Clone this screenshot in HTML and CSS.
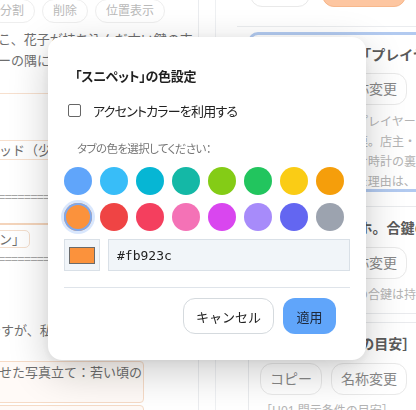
FILE: index.html
```html
<!DOCTYPE html>
<html lang="ja">
<head>
  <meta charset="UTF-8" />
  <meta name="viewport" content="width=device-width, initial-scale=1.0"/>
  <title>スニペットの色設定</title>
  <link rel="stylesheet" href="styles.css">
</head>
<body>
  <div class="page">
    <section class="editor">
      <div class="toolbar">
        <span class="pill">分割</span>
        <span class="pill">削除</span>
        <span class="pill">位置表示</span>
      </div>
      <div class="doc">
        <p class="ln">こ、花子が持ち込んだ古い鍵の束</p>
        <p class="ln">ーの隅に置かれたままだった。</p>
        <div class="rule"></div>
        <p class="ln mark">ッド（少し埃をかぶった）</p>
        <p class="ln sep">==========================</p>
        <div class="rule thick"></div>
        <p class="ln tag-line"><span class="tag">ン」</span></p>
        <p class="ln sep second">==========================</p>
        <p class="ln low"><span class="link">で</span>すが、私はその鍵を</p>
        <p class="ln box">せた写真立て：若い頃の</p>
        <p class="ln box next"></p>
      </div>
    </section>

    <div class="splitter"></div>

    <aside class="panel">
      <div class="panel-bar">
        <span class="bar-btn ghost"></span>
        <span class="bar-btn accent"></span>
      </div>

      <div class="cards">
        <div class="card selected">
          <div class="card-title">［S03 老舗喫茶「プレイヤー専用」の席］</div>
          <div class="card-actions">
            <span class="act">コピー</span><span class="act">名称変更</span><span class="act">削除</span>
          </div>
          <p class="card-desc">奥の席は常連の「プレイヤー専用」</p>
          <p class="card-desc">カウンター席の常連。店主・マスター</p>
          <p class="card-desc">合鍵はいつも壁掛け時計の裏にある</p>
          <p class="card-desc">いつもそこに置いた理由は、落とさない</p>
        </div>

        <div class="card">
          <div class="card-title">［K05 店主スマホ。合鍵の所在］</div>
          <div class="card-actions">
            <span class="act">コピー</span><span class="act">名称変更</span><span class="act">削除</span>
          </div>
          <p class="card-desc">店主いわく、普段の合鍵は持ち歩かない</p>
        </div>

        <div class="card">
          <div class="card-title">［H01 開示条件の目安］</div>
          <div class="card-actions">
            <span class="act">コピー</span><span class="act">名称変更</span><span class="act">削除</span>
          </div>
          <p class="card-desc">［H01 開示条件の目安］</p>
        </div>
      </div>
    </aside>
  </div>

  <div class="overlay">
    <div class="dialog">
      <h2 class="dialog-title">「スニペット」の色設定</h2>

      <label class="check-row">
        <input type="checkbox" class="check">
        <span>アクセントカラーを利用する</span>
      </label>

      <p class="hint">タブの色を選択してください：</p>

      <div class="swatches">
        <span class="swatch" style="background:#60a5fa"></span>
        <span class="swatch" style="background:#38bdf8"></span>
        <span class="swatch" style="background:#06b6d4"></span>
        <span class="swatch" style="background:#14b8a6"></span>
        <span class="swatch" style="background:#84cc16"></span>
        <span class="swatch" style="background:#22c55e"></span>
        <span class="swatch" style="background:#facc15"></span>
        <span class="swatch" style="background:#f59e0b"></span>
        <span class="swatch active" style="background:#fb923c"></span>
        <span class="swatch" style="background:#ef4444"></span>
        <span class="swatch" style="background:#f43f5e"></span>
        <span class="swatch" style="background:#f472b6"></span>
        <span class="swatch" style="background:#d946ef"></span>
        <span class="swatch" style="background:#a78bfa"></span>
        <span class="swatch" style="background:#6366f1"></span>
        <span class="swatch" style="background:#9ca3af"></span>
      </div>

      <div class="custom-row">
        <span class="picker"><span class="picker-fill" style="background:#fb923c"></span></span>
        <input type="text" class="hex" value="#fb923c">
      </div>

      <div class="dialog-actions">
        <button class="btn cancel">キャンセル</button>
        <button class="btn apply">適用</button>
      </div>
    </div>
  </div>
</body>
</html>
```

FILE: styles.css
```css
body {
  margin: 0;
  padding: 0;
  background: #ffffff;
  font-family: "Noto Sans", "Noto Sans CJK JP", sans-serif;
  color: #333;
  overflow: hidden;
  height: 410px;
}

p {
  margin: 0;
}

.page {
  display: flex;
  width: 460px;
  height: 410px;
}

/* 左側のエディタ */
.editor {
  width: 198px;
  flex-shrink: 0;
  border-right: 1px solid #e8eaed;
  overflow: hidden;
}

.toolbar {
  display: flex;
  gap: 7px;
  margin-left: -11px;
  margin-top: -1px;
}

.pill {
  height: 22px;
  line-height: 22px;
  padding: 0 10px;
  border: 1px solid #ececec;
  border-radius: 999px;
  font-size: 12px;
  color: #b0b0b0;
  white-space: nowrap;
}

.doc {
  margin-top: 6px;
  margin-left: -2px;
}

.ln {
  font-size: 13px;
  line-height: 21px;
  color: #5a5a5a;
  white-space: nowrap;
}

.rule {
  margin-top: 22px;
  height: 1px;
  background: #f6dcc8;
}

.rule.thick {
  margin-top: 15px;
  height: 2px;
  background: #f3cfb2;
}

.ln.mark {
  margin-top: 46px;
  margin-left: -6px;
  padding-left: 6px;
  line-height: 18px;
  border: 1px solid #f6dcc8;
  border-radius: 3px;
}

.ln.sep {
  margin-top: 27px;
  color: #9a9a9a;
  letter-spacing: -1px;
}

.ln.sep.second {
  margin-top: 0;
  line-height: 18px;
}

.ln.tag-line {
  margin-top: 4px;
}

.tag {
  display: inline-block;
  line-height: 16px;
  padding: 0 4px 0 8px;
  margin-left: -8px;
  border: 1px solid #f3dac6;
  border-radius: 5px;
}

.ln.low {
  margin-top: 52px;
  margin-left: -10px;
}

.link {
  color: #6e9ad6;
}

.ln.box {
  margin-top: 20px;
  margin-left: -4px;
  padding-left: 4px;
  width: 144px;
  height: 40px;
  border: 1px solid #f5d6bf;
  border-radius: 4px;
  background: #fffaf6;
}

.ln.box.next {
  margin-top: 2px;
}

.splitter {
  width: 16px;
  flex-shrink: 0;
  border-right: 1px solid #eceef1;
}

/* 右側のスニペット一覧 */
.panel {
  flex: 1;
  padding-left: 21px;
}

.panel-bar {
  display: flex;
  gap: 12px;
  margin-top: -25px;
  padding-left: 13px;
  padding-bottom: 19px;
  border-bottom: 1px solid #e8eaed;
}

.bar-btn {
  height: 30px;
  border-radius: 12px;
  border: 1px solid #e6e6e6;
}

.bar-btn.ghost {
  width: 58px;
}

.bar-btn.accent {
  width: 82px;
  background: #fdbf95;
  border-color: #f6ad7b;
}

.cards {
  margin-top: 5px;
  padding-left: 11px;
}

.card {
  width: 200px;
  border: 1px solid #e6e8eb;
  border-radius: 10px;
  padding: 10px 11px 8px;
  margin-top: 8px;
  overflow: hidden;
}

.card.selected {
  margin-top: 0;
  height: 160px;
  box-sizing: border-box;
  border: 3px solid #a8c3ee;
  padding: 9px 9px 0;
}

.card.selected + .card {
  margin-top: 14px;
}

.card-title {
  font-size: 14px;
  line-height: 22px;
  font-weight: bold;
  color: #444;
  white-space: nowrap;
}

.card-actions {
  display: flex;
  gap: 9px;
  margin-top: 8px;
}

.card.selected .card-actions {
  margin-top: 7px;
}

.act {
  height: 30px;
  line-height: 30px;
  padding: 0 9px;
  border: 1px solid #e6e6e6;
  border-radius: 12px;
  font-size: 14px;
  color: #777;
  white-space: nowrap;
}

.card-desc {
  font-size: 12px;
  line-height: 20px;
  color: #a9a9a9;
  white-space: nowrap;
}

.card-actions + .card-desc {
  margin-top: 6px;
}

.card.selected .card-actions + .card-desc {
  margin-top: 7px;
}

/* モーダル */
.overlay {
  position: fixed;
  top: 0;
  left: 0;
  right: 0;
  bottom: 0;
  background: rgba(255, 255, 255, 0.12);
  backdrop-filter: blur(0.5px);
}

.dialog {
  position: absolute;
  left: 48px;
  top: 37px;
  width: 318px;
  box-sizing: border-box;
  padding: 28px 16px 26px;
  background: #ffffff;
  border-radius: 14px;
  box-shadow: 0 12px 40px rgba(0, 0, 0, 0.2), 0 2px 8px rgba(0, 0, 0, 0.06);
  font-family: "Noto Sans CJK JP", "Noto Sans", sans-serif;
  font-feature-settings: "palt";
}

.dialog-title {
  margin: 0;
  padding-left: 11px;
  font-size: 13px;
  line-height: 22px;
  font-weight: bold;
  color: #1f1f1f;
  letter-spacing: -0.3px;
}

.check-row {
  display: flex;
  align-items: center;
  height: 20px;
  margin-top: 13px;
  font-size: 13px;
  letter-spacing: -0.8px;
  color: #222;
}

.check {
  appearance: none;
  -webkit-appearance: none;
  width: 13px;
  height: 13px;
  margin: 0 12px 0 4px;
  border: 1px solid #666;
  border-radius: 2px;
  background: #fff;
}

.hint {
  margin-top: 19px;
  padding-left: 13px;
  font-size: 11.5px;
  line-height: 18px;
  letter-spacing: -0.6px;
  color: #777;
}

.swatches {
  display: grid;
  grid-template-columns: repeat(8, 28px);
  gap: 8px;
  margin-top: 10px;
}

.swatch {
  width: 28px;
  height: 28px;
  border-radius: 50%;
}

.swatch.active {
  box-shadow: inset 0 0 0 2px #7ea8ec, 0 0 0 3px rgba(147, 187, 250, 0.35);
}

.custom-row {
  display: flex;
  gap: 8px;
  margin-top: 8px;
}

.picker {
  width: 36px;
  height: 32px;
  box-sizing: border-box;
  display: flex;
  align-items: center;
  justify-content: center;
  background: #f1f5f9;
  border: 1px solid #d9e0e7;
}

.picker-fill {
  width: 26px;
  height: 17px;
  box-sizing: border-box;
  border: 1px solid #6b6b6b;
}

.hex {
  flex: 1;
  height: 32px;
  box-sizing: border-box;
  padding: 0 8px;
  background: #f1f5f9;
  border: 1px solid #d9e0e7;
  font-family: "DejaVu Sans Mono", monospace;
  font-size: 13px;
  color: #222;
  outline: none;
}

.dialog-actions {
  display: flex;
  justify-content: flex-end;
  gap: 9px;
  margin-top: 16px;
  padding-top: 10px;
  padding-right: 14px;
  border-top: 1px solid #dfe4ea;
}

.btn {
  height: 36px;
  border-radius: 12px;
  font-family: "Noto Sans CJK JP", sans-serif;
  font-size: 13px;
  color: #222;
  cursor: pointer;
}

.btn.cancel {
  width: 91px;
  background: #fff;
  border: 1px solid #d5dade;
}

.btn.apply {
  width: 53px;
  background: #60a5fa;
  border: none;
  color: #1e293b;
}
```
